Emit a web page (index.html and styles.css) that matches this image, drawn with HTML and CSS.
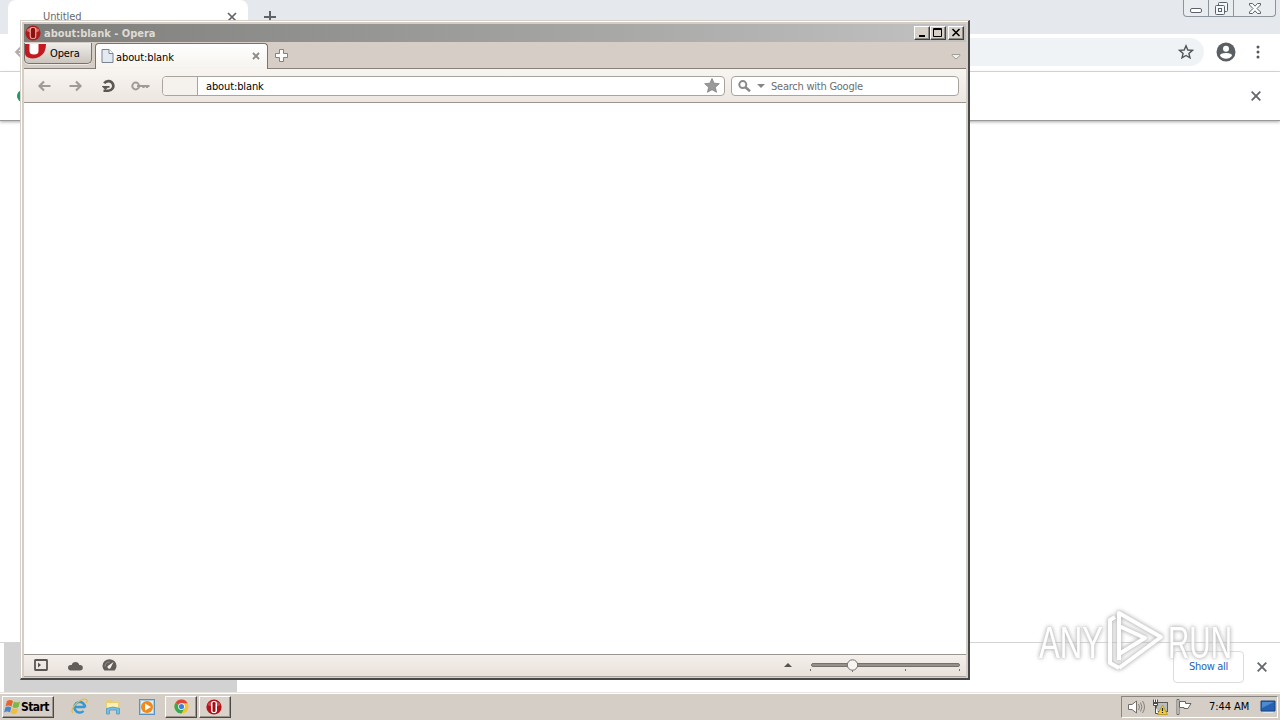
FILE: index.html
```html
<!DOCTYPE html>
<html lang="en">
<head>
<meta charset="utf-8">
<title>Desktop</title>
<link rel="stylesheet" href="styles.css">
</head>
<body>
<div class="desktop">
  <main class="chrome">
    <div class="chrome-tabs">
      <div class="chrome-tab"><span class="chrome-title">Untitled</span>
        <svg width="10" height="10" viewBox="0 0 10 10"><path d="M1 1l8 8M9 1L1 9" stroke="#5f6368" stroke-width="1.7"/></svg>
      </div>
      <svg class="chrome-plus" width="12" height="12" viewBox="0 0 12 12"><path d="M6 0v12M0 6h12" stroke="#5f6368" stroke-width="2"/></svg>
      <div class="chrome-controls">
        <span class="cc-min"><svg width="12" height="5" viewBox="0 0 12 5"><rect x=".5" y=".5" width="11" height="4" rx="1.5" fill="#fff" stroke="#59616b"/></svg></span>
        <span class="cc-max"><svg width="13" height="13" viewBox="0 0 13 13"><g fill="#f5f7f8" stroke="#59616b"><rect x="3.5" y=".5" width="9" height="9" rx="1"/><rect x=".5" y="3.5" width="9" height="9" rx="1"/><rect x="3.5" y="6.5" width="3" height="3"/></g></svg></span>
        <span class="cc-close"><svg width="12" height="11" viewBox="0 0 12 11"><path d="M.5 .5h3L6 3.2 8.500 .5h3v1.500L8 5.500l3.500 3.500v1.500h-3L6 7.800 3.500 10.500h-3V9L4 5.500.5 2z" fill="#fff" stroke="#59616b"/></svg></span>
      </div>
    </div>
    <div class="chrome-bar">
      <svg class="chrome-back" width="14" height="14" viewBox="0 0 14 14"><path d="M13 7H2M7 2L2 7l5 5" fill="none" stroke="#b3aaac" stroke-width="1.8"/></svg>
      <div class="chrome-url"><svg width="16" height="16" viewBox="0 0 16 16"><path d="M8 1.800l1.800 4.200 4.600.4-3.500 3 1.100 4.500L8 11.500l-4 2.400 1.100-4.500-3.500-3 4.600-.4z" fill="none" stroke="#50555b" stroke-width="1.400"/></svg></div>
      <svg class="avatar" width="20" height="20" viewBox="0 0 20 20"><circle cx="10" cy="10" r="9.500" fill="#5b5f64"/><circle cx="10" cy="6.800" r="3" fill="#fff"/><path d="M4 13.800q0-2.800 6-2.800t6 2.800q-2.200 3-6 3t-6-3z" fill="#fff"/></svg>
      <svg class="dots" width="4" height="14" viewBox="0 0 4 14"><g fill="#55595e"><circle cx="2" cy="2" r="1.500"/><circle cx="2" cy="7" r="1.500"/><circle cx="2" cy="12" r="1.500"/></g></svg>
    </div>
    <div class="infobar"><i class="info-dot"></i>
      <svg width="10" height="10" viewBox="0 0 10 10"><path d="M.7.7l8.600 8.600M9.300.7L.7 9.300" stroke="#63676b" stroke-width="1.800"/></svg>
    </div>
    <div class="page"></div>
    <div class="shelf"><div class="download"></div><div class="show-all">Show all</div>
      <svg width="10" height="10" viewBox="0 0 10 10"><path d="M.7.7l8.600 8.600M9.300.7L.7 9.300" stroke="#63676b" stroke-width="1.800"/></svg>
    </div>
  </main>

  <section class="opera">
    <header class="titlebar">
      <svg class="title-icon" width="16" height="16" viewBox="0 0 16 16"><circle cx="8" cy="8" r="7.600" fill="#b01a1a"/><path d="M1.500 6a7 6 0 0 1 13 0q-6 3-13 0z" fill="#d96a60"/><rect x="4.700" y="2" width="6.600" height="12" rx="3" fill="#f0b5af"/><rect x="5.800" y="2.800" width="4.400" height="10.400" rx="2" fill="#8b1010"/></svg>
      <span class="title-text">about:blank - Opera</span>
      <span class="win-btn"><svg width="12" height="10" viewBox="0 0 12 10"><path d="M3 8h6" stroke="#000" stroke-width="2"/></svg></span>
      <span class="win-btn"><svg width="12" height="10" viewBox="0 0 12 10"><path d="M1.500 .5h8v8h-8zM1 1.500h9" fill="none" stroke="#000"/></svg></span>
      <span class="win-btn win-close"><svg width="12" height="10" viewBox="0 0 12 10"><path d="M2.500 1l7 7M9.500 1L2.500 8" stroke="#000" stroke-width="1.600"/></svg></span>
    </header>
    <div class="tabbar">
      <div class="menu-btn">
        <svg width="22" height="17" viewBox="0 0 22 17"><path d="M0 1h21q0 9-6 12.500Q9 17 3 14.500 0 13 0 10z" fill="#c4191f"/><path d="M4.500 1h9v7q0 3.500-4.500 3.500T4.500 8z" fill="#fff"/></svg>
        <span>Opera</span></div>
      <div class="tab">
        <svg width="13" height="14" viewBox="0 0 13 14"><path d="M1 .5h7l4 4v9H1z" fill="#e3eaf1" stroke="#7b848e"/><path d="M8 .5v4h4" fill="#fff" stroke="#7b848e"/></svg>
        <span>about:blank</span>
        <svg class="tab-x" width="8" height="8" viewBox="0 0 8 8"><path d="M1 1l6 6M7 1L1 7" stroke="#8d8984" stroke-width="1.900"/></svg>
      </div>
      <svg class="new-tab" width="13" height="13" viewBox="0 0 13 13"><path d="M4.500.5h4v4h4v4h-4v4h-4v-4h-4v-4h4z" fill="#fdfcfa" stroke="#85817b"/></svg>
      <svg class="tab-menu" width="10" height="7" viewBox="0 0 10 7"><path d="M1 1.500h8v1L5 6 1 2.500z" fill="#f2eeea" stroke="#a39e99"/></svg>
    </div>
    <div class="toolbar">
      <svg class="nav-back" width="14" height="12" viewBox="0 0 14 12"><path d="M13.500 6H3M7 1.500L2.500 6 7 10.500" fill="none" stroke="#a19b96" stroke-width="2.200"/></svg>
      <svg class="nav-fwd" width="14" height="12" viewBox="0 0 14 12"><path d="M.5 6H11M7 1.500L11.500 6 7 10.500" fill="none" stroke="#a19b96" stroke-width="2.200"/></svg>
      <svg class="reload" width="15" height="14" viewBox="0 0 15 14"><path d="M3.200 4.200A5 4.800 0 1 1 7 11.700H2.500" fill="none" stroke="#5b5752" stroke-width="2.600"/><path d="M1 7h7.500v1.800H6.500L4.500 11 1 7.500z" fill="#5b5752"/></svg>
      <svg class="key" width="19" height="10" viewBox="0 0 19 10"><circle cx="4.700" cy="5" r="3.400" fill="none" stroke="#a19b96" stroke-width="2"/><path d="M6 5h12.500M12.500 5v2M16 5v2" stroke="#a19b96" stroke-width="2.200"/></svg>
      <div class="address"><span class="badge"></span><span class="url">about:blank</span>
        <svg width="16" height="15" viewBox="0 0 16 15"><path d="M8 .5l2.100 4.700 5.200.5-3.900 3.500 1.100 5.100L8 11.700l-4.500 2.600 1.100-5.100L.7 5.700l5.200-.5z" fill="#999" stroke="#828282" stroke-width=".8"/></svg>
      </div>
      <div class="search">
        <svg width="13" height="12" viewBox="0 0 13 12"><circle cx="4.800" cy="4.600" r="3.500" fill="none" stroke="#8a8a8a" stroke-width="2"/><path d="M7.500 7.200l4.500 4" stroke="#8a8a8a" stroke-width="2.600"/></svg>
        <svg class="caret" width="8" height="4" viewBox="0 0 8 4"><path d="M0 0h8L4 4z" fill="#858585"/></svg>
        <span>Search with Google</span></div>
    </div>
    <div class="blank"></div>
    <footer class="status">
      <svg width="14" height="12" viewBox="0 0 14 12"><rect x="1" y="1" width="12" height="10" rx=".5" fill="none" stroke="#5b5651" stroke-width="1.800"/><path d="M4 3.500L7 6 4 8.500z" fill="#5b5651"/></svg>
      <svg class="cloud" width="15" height="11" viewBox="0 0 15 11"><path d="M3 10.500a2.800 2.800 0 0 1-.3-5.600h1A3.900 3.900 0 0 1 11.300 4.900h.7a2.800 2.800 0 0 1 0 5.600z" fill="#625d58"/></svg>
      <svg class="gauge" width="15" height="12" viewBox="0 0 15 12"><path d="M2.300 11.500A7 6.800 0 1 1 12.700 11.500z" fill="#625d58"/><path d="M11.500 3L8.800 8.500a1.700 1.700 0 1 1-2.300-2z" fill="#f4efea"/><path d="M3 7.500A4.700 4.700 0 0 1 7.500 3" fill="none" stroke="#aaa49e" stroke-width=".8"/></svg>
      <svg class="up" width="8" height="4" viewBox="0 0 8 4"><path d="M0 4h8L4 0z" fill="#57524d"/></svg>
      <svg class="slider" width="151" height="15" viewBox="0 0 151 15"><rect x="1.500" y="5.500" width="148" height="3" rx="1.500" fill="#96908a" stroke="#77716c"/><path d="M.5 11v2M42.500 11v3M95.500 11v2M149.500 11v2" stroke="#77716c"/><circle cx="42.500" cy="7" r="5.200" fill="#f7f5f2" stroke="#77716c"/></svg>
    </footer>
  </section>

  <svg class="watermark" width="200" height="68" viewBox="0 0 200 68">
    <text x="3" y="51" textLength="64" lengthAdjust="spacingAndGlyphs">ANY</text>
    <text x="132" y="51" textLength="64" lengthAdjust="spacingAndGlyphs">RUN</text>
    <path d="M79 10l-5 3v43l9 5M83 53V6l42 24-42 31M83 6v13l26 12-26 16"/>
  </svg>

  <nav class="taskbar">
    <div class="start">
      <svg width="17" height="16" viewBox="0 0 17 16"><path d="M3 2q3-2 6 0L7.500 7.500q-3-2-6 0z" fill="#e7632c"/><path d="M10 2.500q3 2 6 0L14.500 8q-3 2-6 0z" fill="#78b943"/><path d="M1.300 8.500q3-2 6 0L6 13.500q-3-2-6 0z" fill="#4a86cb"/><path d="M8.200 9q3 2 6 0l-1.500 5q-3 2-6 0z" fill="#f2bd37"/></svg>
      <b>Start</b></div>
    <svg class="ie" width="17" height="17" viewBox="0 0 17 17"><path d="M13.800 9H4.200M14 9.500A5.300 5.300 0 1 0 12.500 13" fill="none" stroke="#3398d6" stroke-width="2.500"/><path d="M2 15Q-1 12 5 6T15.500 1.500Q17 3 15 5" fill="none" stroke="#e0bb50" stroke-width="1.200"/></svg>
    <svg class="folder" width="16" height="16" viewBox="0 0 16 16"><path d="M1 3l1-2h5l1 2h6v8H1z" fill="#e8ce70"/><path d="M2 4h11v5H2z" fill="#fbf0b5"/><path d="M1.500 15V9.500Q8 6.500 14.500 9.500V15h-3v-4h-7v4z" fill="#75bfe4" stroke="#4d9bc5" stroke-width=".8"/></svg>
    <svg class="media" width="16" height="16" viewBox="0 0 16 16"><rect x=".5" y=".5" width="15" height="15" fill="#a8cde9" stroke="#5b91bd"/><rect x="2" y="2" width="12" height="12" fill="#e1eef7"/><circle cx="8" cy="8" r="6" fill="#f18a16"/><path d="M6 4.500l6 3.500-6 3.500z" fill="#fff"/></svg>
    <div class="task"><svg width="15" height="15" viewBox="0 0 16 16"><circle cx="8" cy="8" r="7.500" fill="#f3c42e"/><path d="M8 8L1.500 4.200A7.500 7.500 0 0 1 14.600 4.500H8z" fill="#dc4939"/><path d="M1.500 4.200A7.500 7.500 0 0 0 8 15.500L11 10 8 8z" fill="#38a852"/><circle cx="8" cy="8" r="3.600" fill="#fff"/><circle cx="8" cy="8" r="2.800" fill="#427fe1"/></svg></div>
    <div class="task task-opera"><svg width="16" height="16" viewBox="0 0 16 16"><circle cx="8" cy="8" r="7.600" fill="#b51319"/><path d="M1.500 6a7 6 0 0 1 13 0q-6 3-13 0z" fill="#d5474a"/><rect x="5" y="2" width="6" height="12" rx="2.800" fill="#fff"/><rect x="6.500" y="3" width="3" height="10" rx="1.300" fill="#a01016"/></svg></div>
    <div class="tray">
      <svg width="17" height="16" viewBox="0 0 17 16"><path d="M.5 5.500H4L8.500 2v12L4 10.500H.5z" fill="#fff" stroke="#706d69"/><path d="M10.500 5q2 3 0 6M12.500 3.500q3 4.500 0 9M14.500 2q4 6 0 12" fill="none" stroke="#85817c"/></svg>
      <svg class="net" width="16" height="16" viewBox="0 0 16 16"><rect x="4.500" y="3.500" width="11" height="9" fill="#b9bdc0" stroke="#5d5b58"/><path d="M1.500.5v4h4v-4M3.500.5V4M1.500 3.500h4v3h-4zM3.500 7v7.500h3" fill="#fff" stroke="#4e4c49"/><path d="M10.500 6l5 9.500h-10z" fill="#f6ce22" stroke="#ae8c14" stroke-width=".7"/><path d="M10.500 9v3M10.500 13v1" stroke="#222" stroke-width="1.200"/></svg>
      <svg class="flag" width="16" height="16" viewBox="0 0 16 16"><path d="M1 .5h2v15H1z" fill="#fff" stroke="#696662"/><path d="M3.500 2.500h6v2h5.500q-1.500 2.500-3 5h-4v-1h-4.500z" fill="#fff" stroke="#696662"/></svg>
      <span>7:44 AM</span>
      <svg class="screen" width="16" height="14" viewBox="0 0 16 14"><path d="M1 1h14v10H1z" fill="#2462b1" stroke="#174280"/><path d="M2 2h12L2 8z" fill="#4d8bd0"/><path d="M3 12.500h10" stroke="#d9e4ee"/></svg>
    </div>
  </nav>
</div>
</body>
</html>
```
FILE: styles.css
```css
* { box-sizing: border-box; }
body { margin: 0; font: 11px "DejaVu Sans Condensed", "DejaVu Sans", sans-serif; font-stretch: condensed; letter-spacing: -.3px; color: #000; }
svg { display: block; flex: none; }
.desktop { position: relative; width: 1280px; height: 720px; overflow: hidden; display: flex; flex-direction: column; background: #fff; }
.chrome { height: 692px; display: flex; flex-direction: column; }
.chrome-tabs { height: 34px; display: flex; align-items: flex-start; background: #e5e9ed; }
.chrome-tab { width: 240px; height: 34px; margin-left: 8px; padding: 12px 11px 0 35px; display: flex; justify-content: space-between; background: #fff; border-radius: 8px 8px 0 0; }
.chrome-title { margin-top: -2px; color: #66696c; letter-spacing: -.1px; line-height: 14px; }
.chrome-plus { margin: 11px 0 0 16px; }
.chrome-controls { display: flex; height: 17px; width: 93px; margin: 0 4px 0 auto; border: 1px solid #8d959c; border-top: 0; border-radius: 0 0 4px 4px; background: #eaedf0; }
.chrome-controls span { display: flex; justify-content: center; }
.cc-min { width: 25px; padding-top: 8px; border-right: 1px solid #8d959c; }
.cc-max { width: 25px; padding-top: 2px; border-right: 1px solid #8d959c; }
.cc-close { flex: 1; padding-top: 3px; }
.chrome-bar { height: 38px; display: flex; align-items: center; border-bottom: 1px solid #d7dadd; padding-bottom: 1px; }
.chrome-back { margin-left: 14px; }
.chrome-url { flex: 1; height: 28px; margin-left: 100px; border-radius: 14px; background: #f0f3f6; display: flex; justify-content: flex-end; align-items: center; padding-right: 10px; }
.avatar { margin-left: 12px; }
.dots { margin: 0 20px; }
.infobar { height: 49px; display: flex; align-items: center; justify-content: space-between; padding: 0 19px 0 17px; border-bottom: 1px solid #999; box-shadow: 0 1px 3px #aaa; }
.info-dot { width: 12px; height: 12px; border-radius: 50%; background: #259765; }
.page { flex: 1; }
.shelf { height: 50px; display: flex; align-items: center; border-top: 1px solid #d4d4d4; padding: 0 13px 0 4px; }
.shelf svg { margin-bottom: 1px; }
.download { width: 233px; height: 49px; background: #d2d2d2; }
.show-all { width: 71px; height: 32px; margin: 0 13px 1px auto; border: 1px solid #dadce0; border-radius: 4px; color: #1e64ba; text-align: center; line-height: 30px; letter-spacing: -.3px; }

.opera { position: absolute; left: 20px; top: 20px; width: 950px; height: 660px; border: 1px solid #d4d0c8; border-right: 2px solid #484848; border-bottom: 2px solid #484848; background: #d4cec6; box-shadow: inset 1px 1px #fff; display: flex; flex-direction: column; padding: 3px 2px 1px 3px; }
.titlebar { height: 18px; display: flex; align-items: center; padding: 0 2px 0 1px; background: linear-gradient(90deg, #7c7c79, #c2c2c2); }
.title-text { flex: 1; margin-left: 3px; color: #dedbd5; font-weight: bold; letter-spacing: -.02px; line-height: 18px; padding-top: 1px; }
.win-btn { width: 16px; height: 14px; padding: 1px; background: #d6d0c8; border: 1px solid #fff; border-right-color: #404040; border-bottom-color: #404040; box-shadow: inset -1px -1px #8d8882; }
.win-close { margin-left: 2px; }
.tabbar { height: 27px; display: flex; border-bottom: 1px solid #85807a; background: #d5cdc6; }
.menu-btn { width: 68px; height: 21px; margin: 1px 1px 0 0; display: flex; align-items: flex-start; gap: 3px; border: 1px solid #777370; border-width: 0 1px 1px; border-radius: 0 0 5px 5px; background: linear-gradient(#f0eeea, #cbc5be); box-shadow: 0 1px #eeeae5; }
.menu-btn span { line-height: 22px; letter-spacing: -.1px; }
.tab { width: 173px; height: 26px; margin: 1px 0 -1px 2px; display: flex; align-items: center; padding: 0 7px 1px 5px; border: 1px solid #77736e; border-bottom: 0; border-radius: 4px 4px 0 0; background: linear-gradient(#fff, #f6f3ef); z-index: 1; }
.tab span { margin: 2px 0 0 2px; letter-spacing: -.11px; }
.tab-x { margin-left: auto; }
.new-tab { margin: 7px 0 0 7px; }
.tab-menu { margin: 11px 5px 0 auto; }
.toolbar { height: 34px; display: flex; align-items: center; border-bottom: 1px solid #9b9590; background: linear-gradient(#f8f5f1, #ede6e1); padding-right: 7px; }
.nav-back { margin-left: 13px; }
.nav-fwd { margin-left: 18px; }
.reload { margin-left: 18px; }
.key { margin-left: 15px; }
.address { width: 563px; height: 20px; margin-left: 12px; border: 1px solid #aaa49e; border-radius: 4px; background: #fff; display: flex; align-items: center; padding-right: 4px; overflow: hidden; }
.badge { width: 35px; height: 18px; border-right: 1px solid #aaa49e; background: #f5f1ed; }
.url { flex: 1; margin-left: 8px; padding-top: 1px; letter-spacing: -.12px; }
.search { flex: 1; height: 20px; margin-left: 6px; border: 1px solid #aaa49e; border-radius: 4px; background: #fff; display: flex; align-items: center; padding-left: 6px; color: #6d6d6d; letter-spacing: -.24px; }
.search span { padding-top: 1px; }
.caret { margin: 0 6px 0 6px; }
.blank { flex: 1; background: #fff; }
.status { height: 23px; display: flex; align-items: center; padding: 0 5px 1px 10px; border-top: 1px solid #9b9590; border-bottom: 1px solid #aaa49d; background: linear-gradient(#f5efeb, #e8e1db); }
.cloud { margin-left: 20px; }
.gauge { margin-left: 19px; }
.up { margin: 0 18px 0 auto; }

.watermark { position: absolute; left: 1036px; top: 607px; font: 45px "Liberation Sans Narrow", "Liberation Sans", sans-serif; letter-spacing: 0; opacity: .85; filter: drop-shadow(0 0 2px #aaa) drop-shadow(0 0 1px #ccc); pointer-events: none; }
.watermark text { fill: #fff; }
.watermark path { fill: none; stroke: #fff; stroke-width: 4px; stroke-linejoin: round; }

.taskbar { height: 28px; display: flex; align-items: center; padding: 0 2px; background: #d5cec6; border-top: 1px solid #e8e5e0; box-shadow: inset 0 1px #fff; }
.start, .task { height: 22px; border: 1px solid #fff; border-right-color: #4b4946; border-bottom-color: #4b4946; box-shadow: inset -1px -1px #9b958e; display: flex; align-items: center; }
.start { width: 52px; padding-left: 1px; }
.start b { font-size: 12px; letter-spacing: -.55px; }
.ie { margin-left: 17px; }
.folder { margin-left: 17px; }
.media { margin-left: 18px; }
.task { width: 32px; margin-left: 10px; justify-content: center; background: #d9d3cc; }
.task-opera { margin-left: 2px; padding-right: 2px; }
.tray { width: 157px; height: 22px; margin-left: auto; border: 1px solid #8a8580; border-right-color: #fff; border-bottom-color: #fff; display: flex; align-items: center; padding: 0 1px 0 6px; }
.net { margin-left: 7px; }
.flag { margin-left: 8px; }
.tray span { margin-left: 17px; letter-spacing: -.05px; white-space: nowrap; }
.screen { margin-left: auto; }
```
